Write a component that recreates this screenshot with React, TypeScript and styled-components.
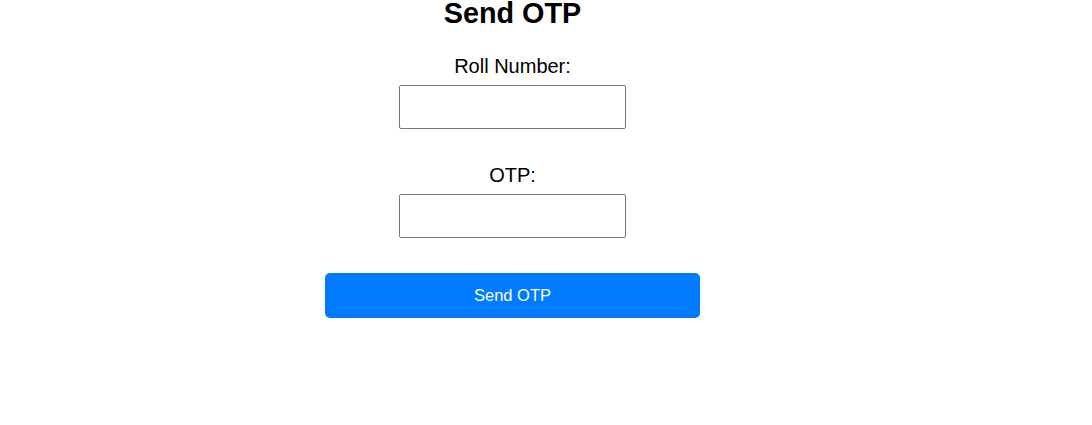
import React from "react";
import styled, { createGlobalStyle } from "styled-components";

const GlobalStyle = createGlobalStyle`
  html, body {
    margin: 0;
    padding: 0;
    background: #ffffff;
  }
  body {
    font-family: "Liberation Sans", Arial, sans-serif;
    color: #000000;
  }
`;

const Page = styled.div`
  width: 1025px;
  display: flex;
  flex-direction: column;
  align-items: center;
`;

const Title = styled.h2`
  margin: 0 0 28px;
  font-size: 28.8px;
  line-height: 27px;
  font-weight: 700;
`;

const Form = styled.form`
  display: flex;
  flex-direction: column;
  align-items: center;
  gap: 35px;
`;

const Field = styled.div`
  display: flex;
  flex-direction: column;
  align-items: center;
  gap: 7px;
`;

const Label = styled.label`
  font-size: 20px;
  line-height: 23px;
`;

const Input = styled.input`
  box-sizing: border-box;
  width: 227px;
  height: 44px;
  margin: 0;
  padding: 0 8px;
  border: 1px solid #767676;
  border-radius: 2px;
  font-family: "Liberation Sans", Arial, sans-serif;
  font-size: 16px;
  background: #ffffff;
  outline: none;
`;

const Button = styled.button`
  box-sizing: border-box;
  width: 375px;
  height: 45px;
  margin: 0;
  border: none;
  border-radius: 5px;
  background: #007bff;
  color: #ffffff;
  font-family: "Liberation Sans", Arial, sans-serif;
  font-size: 16.5px;
  cursor: pointer;
`;

export default function App() {
  return (
    <>
      <GlobalStyle />
      <Page>
        <Title>Send OTP</Title>
        <Form onSubmit={(e) => e.preventDefault()}>
          <Field>
            <Label htmlFor="roll">Roll Number:</Label>
            <Input id="roll" type="text" />
          </Field>
          <Field>
            <Label htmlFor="otp">OTP:</Label>
            <Input id="otp" type="text" />
          </Field>
          <Button type="submit">Send OTP</Button>
        </Form>
      </Page>
    </>
  );
}
